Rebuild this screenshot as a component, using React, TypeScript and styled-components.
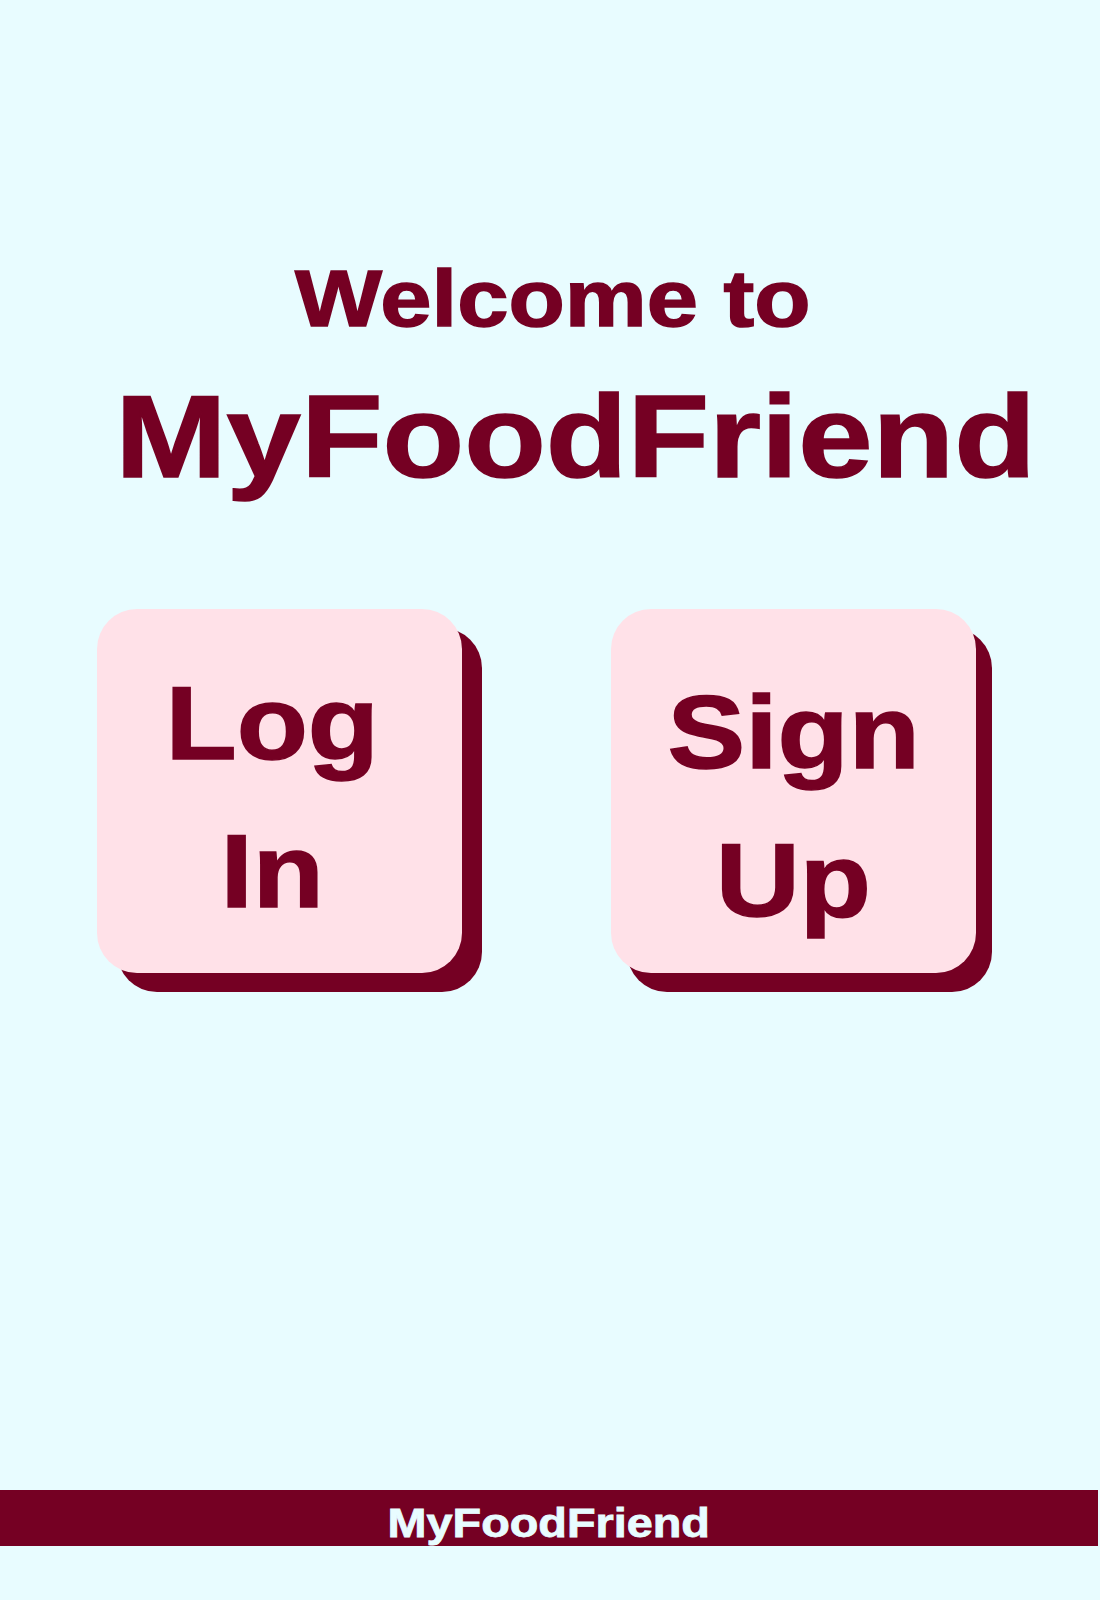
import React from "react";
import styled, { createGlobalStyle } from "styled-components";

const MAROON = "#750023";
const PINK = "#FFE1E8";
const BG = "#E8FCFF";

const GlobalStyle = createGlobalStyle`
  html, body {
    margin: 0;
    padding: 0;
    background: ${BG};
  }
  body {
    font-family: "Liberation Sans", Arial, sans-serif;
  }
`;

const Page = styled.div`
  min-height: 1600px;
  display: flex;
  flex-direction: column;
  background: ${BG};
`;

const Header = styled.header`
  display: flex;
  flex-direction: column;
  align-items: center;
  padding-top: 259px;
`;

const Heading = styled.h1<{ $size: number; $shift?: number; $gap?: number }>`
  margin: ${(p) => p.$gap ?? 0}px 0 0 ${(p) => (p.$shift ?? 0) * 2}px;
  font-family: "Liberation Sans", Arial, sans-serif;
  font-weight: 700;
  font-size: ${(p) => p.$size}px;
  line-height: 1;
  color: ${MAROON};
  white-space: nowrap;
  transform: scaleX(1.152);
  -webkit-text-stroke: 1.5px ${MAROON};
`;

const ButtonRow = styled.div`
  display: flex;
  gap: 149px;
  padding-left: 97px;
  margin-top: 114px;
`;

const Card = styled.button<{ $dx: number; $padTop: number; $padRight?: number }>`
  width: 365px;
  height: 364px;
  border: none;
  border-radius: 40px;
  background: ${PINK};
  box-shadow: ${(p) => p.$dx}px 19px 0 ${MAROON};
  display: flex;
  flex-direction: column;
  align-items: center;
  justify-content: center;
  padding: ${(p) => p.$padTop}px ${(p) => p.$padRight ?? 0}px 0 0;
  cursor: pointer;
`;

const CardLine = styled.span`
  display: block;
  font-family: "Liberation Sans", Arial, sans-serif;
  font-weight: 700;
  font-size: 104px;
  line-height: 148px;
  color: ${MAROON};
  transform: scaleX(1.12);
  -webkit-text-stroke: 1.5px ${MAROON};
`;

const Footer = styled.footer`
  margin-top: auto;
  margin-bottom: 54px;
  width: 1098px;
  height: 46px;
  padding-top: 10px;
  background: ${MAROON};
  display: flex;
  justify-content: center;
`;

const FooterText = styled.span`
  font-family: "Liberation Sans", Arial, sans-serif;
  font-weight: 700;
  font-size: 40px;
  line-height: 46px;
  color: ${BG};
  transform: scaleX(1.17);
  -webkit-text-stroke: 0.8px ${BG};
`;

export default function App() {
  return (
    <Page>
      <GlobalStyle />
      <Header>
        <Heading $size={80} $shift={3}>
          Welcome to
        </Heading>
        <Heading $size={116} $shift={26} $gap={40}>
          MyFoodFriend
        </Heading>
      </Header>
      <ButtonRow>
        <Card $dx={20} $padTop={12} $padRight={14}>
          <CardLine>Log</CardLine>
          <CardLine>In</CardLine>
        </Card>
        <Card $dx={16} $padTop={30}>
          <CardLine>Sign</CardLine>
          <CardLine>Up</CardLine>
        </Card>
      </ButtonRow>
      <Footer>
        <FooterText>MyFoodFriend</FooterText>
      </Footer>
    </Page>
  );
}
